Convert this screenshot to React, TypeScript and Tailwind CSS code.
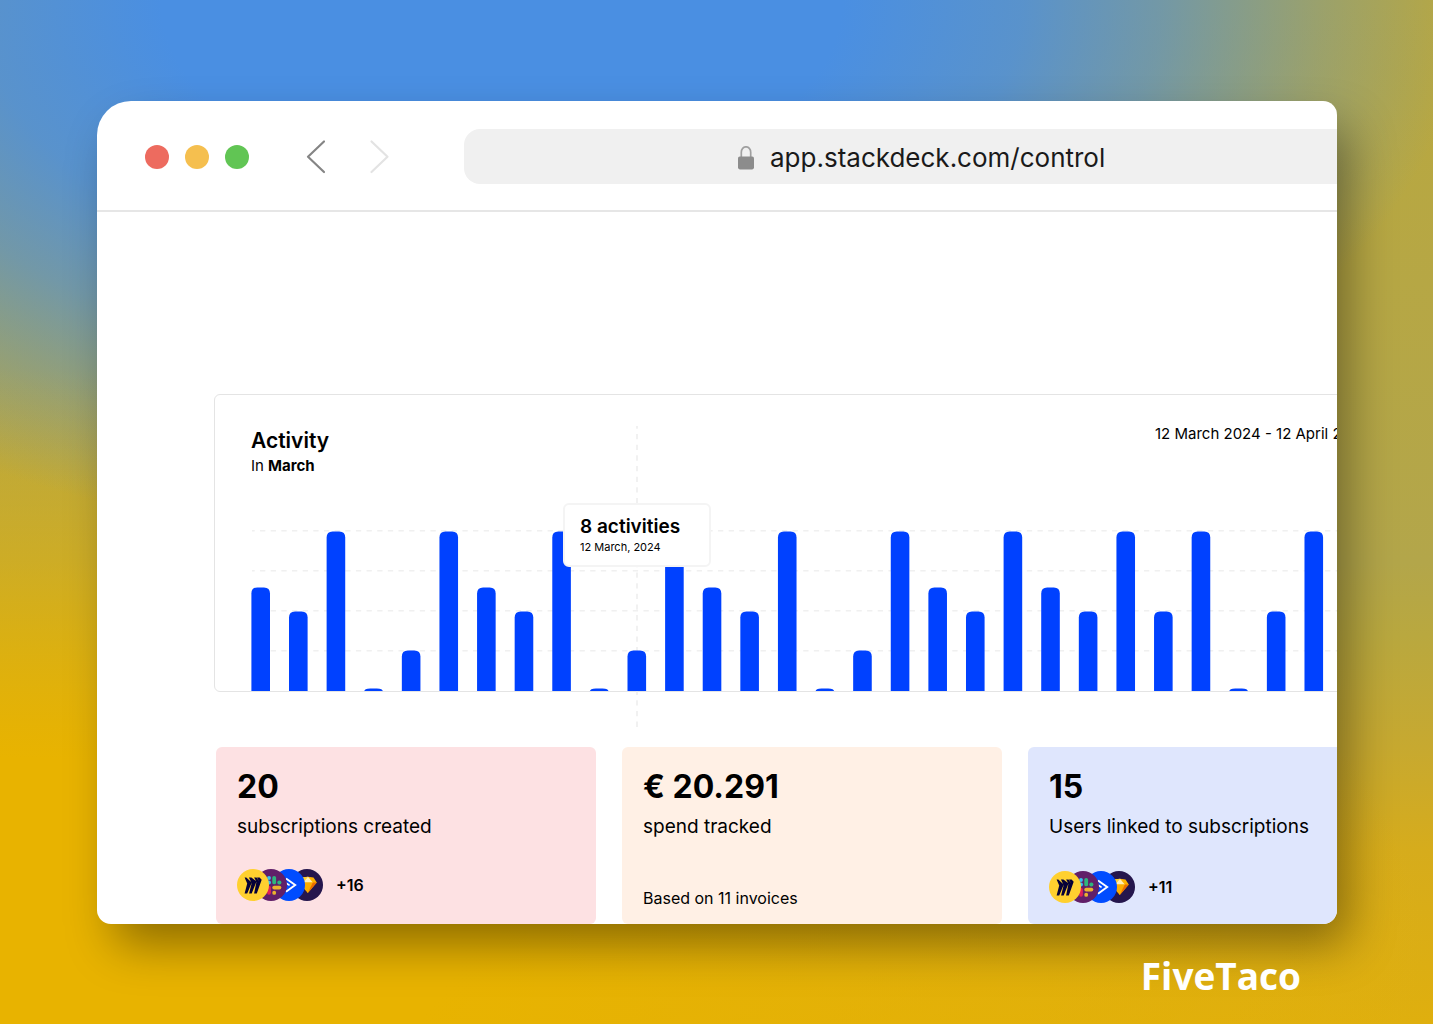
const FULL = 160;
const MID = 104;
const SMALL = 80;
const LOW = 41;
const NONE = 3;

const bars = [
    MID, SMALL, FULL, NONE, LOW, FULL, MID, SMALL, FULL, NONE,
    LOW, FULL, MID, SMALL, FULL, NONE, LOW, FULL, MID, SMALL,
    FULL, MID, SMALL, FULL, SMALL, FULL, NONE, SMALL, FULL,
];

const BAR_STEP = 37.61;
const BAR_WIDTH = 18.6;

function barPath(index: number, height: number) {
    const x = index * BAR_STEP + 0.4;
    const y = FULL - height + 0.4;
    const r = Math.min(6, height);
    return `M${x} ${FULL}V${y + r}Q${x} ${y} ${x + 6} ${y}H${x + BAR_WIDTH - 6}Q${x + BAR_WIDTH} ${y} ${x + BAR_WIDTH} ${y + r}V${FULL}Z`;
}

function MiroIcon() {
    return (
        <svg viewBox="0 0 32 32" className="relative z-40 size-8 shrink-0" aria-hidden="true">
            <circle cx="16" cy="16" r="16" fill="#ffd02f" />
            <path
                d="M19.6 8.5h-2.5l2 3.6-4.7-3.6h-2.5l2.2 4.4-4.8-4.4H7.6l2.6 5.9-2.6 10h2.6l4.7-11.2-2.8 11.2h2.6l4.8-12-2.4 12h2.7l4.9-13.6-2.1-2.3h-2.6l2.1 3.9z"
                fill="#050038"
            />
        </svg>
    );
}

function SlackIcon() {
    return (
        <svg viewBox="0 0 32 32" className="relative z-30 -ml-[14px] size-8 shrink-0" aria-hidden="true">
            <circle cx="16" cy="16" r="16" fill="#611f69" />
            <g strokeWidth="3.8" strokeLinecap="round">
                <path d="M19.2 8.8v4.6" stroke="#2eb67d" />
                <path d="M24.2 13.5h.3" stroke="#2eb67d" />
                <path d="M19.2 18.6h5.2" stroke="#ecb22e" />
                <path d="M19.2 23.7v.2" stroke="#ecb22e" />
                <path d="M14 18.6v5.2" stroke="#e01e5a" />
                <path d="M9 18.6h.2" stroke="#e01e5a" />
                <path d="M9 13.5h5" stroke="#36c5f0" />
                <path d="M14 8.8v.2" stroke="#36c5f0" />
            </g>
        </svg>
    );
}

function ActiveCampaignIcon() {
    return (
        <svg viewBox="0 0 32 32" className="relative z-20 -ml-[14px] size-8 shrink-0" aria-hidden="true">
            <circle cx="16" cy="16" r="16" fill="#004cff" />
            <path d="M13 9.5l9.2 6.6-9.2 6.7" fill="none" stroke="#fff" strokeWidth="1.9" />
            <path d="M13 14l3.6 2.4" fill="none" stroke="#fff" strokeWidth="1.6" />
        </svg>
    );
}

function SketchIcon() {
    return (
        <svg viewBox="0 0 32 32" className="relative z-10 -ml-[14px] size-8 shrink-0" aria-hidden="true">
            <circle cx="16" cy="16" r="16" fill="#25164d" />
            <path d="M11 8.6l6-.8 5.5.8 3.3 4.9-9 10.6-9.2-10.6z" fill="#fdb300" />
            <path d="M11 8.6l6-.8-4.8 5.7H7.6z" fill="#fdd231" />
            <path d="M17 7.8l4.8 5.7h-9.6z" fill="#feeeb7" />
            <path d="M12.2 13.5h9.6l-5 10.6z" fill="#fdad00" />
            <path d="M21.8 13.5h4l-9 10.6z" fill="#ea6c00" />
        </svg>
    );
}

function AppStack({ more }: { more: string }) {
    return (
        <div className="flex items-center">
            <MiroIcon />
            <SlackIcon />
            <ActiveCampaignIcon />
            <SketchIcon />
            <span className="ml-[13px] text-[16px] leading-6 font-semibold">{more}</span>
        </div>
    );
}

function ActivityChart() {
    return (
        <svg className="h-40 w-full overflow-visible" role="img" aria-label="Activities per day">
            {[0, 40, 80, 120].map((y) => (
                <line key={y} x1="1" x2="1157" y1={y - 0.2} y2={y - 0.2} stroke="#f0f0f0" strokeWidth="1.4" strokeDasharray="5.3 5.35" strokeDashoffset="2.6" />
            ))}
            <line x1="386" x2="386" y1="-105" y2="198" stroke="#ececec" strokeWidth="1.4" strokeDasharray="5.3 5.35" strokeDashoffset="2.6" />
            {bars.map((height, index) => (
                <path key={index} d={barPath(index, height)} fill="#0041ff" />
            ))}
        </svg>
    );
}

export default function App() {
    return (
        <div
            className="flex min-h-screen flex-col overflow-hidden bg-[#b9a83f] bg-[radial-gradient(ellipse_66%_53%_at_35%_0%,#4a8fe2_0%,#4a8fe2_36%,#4a8fe2dc_55%,#4a8fe2a0_70%,#4a8fe244_87%,#4a8fe200_102%),radial-gradient(ellipse_100%_56%_at_0%_92%,#e8b300_0%,#e8b300_32%,#e8b30000_100%),linear-gradient(to_bottom,#b9a83f_0%,#b3a64a_55%,#b9a83f_62%,#c7a930_73%,#d6ac1c_83%,#dfaf0e_100%)] pt-[101px] pr-24 pb-6 pl-[97px] font-['Inter',sans-serif] text-black"
        >
            <div className="overflow-hidden rounded-[14px] rounded-tl-[34px] bg-white shadow-[14px_24px_48px_-4px_rgba(0,0,0,0.4)]">
                {/* Browser bar */}
                <header className="flex h-[111px] items-center border-b-2 border-[#e6e6e6] pt-0.5 pl-12">
                    <div className="flex shrink-0 gap-4">
                        <span className="size-6 rounded-full bg-[#ed6b5f]" />
                        <span className="size-6 rounded-full bg-[#f5bf4f]" />
                        <span className="size-6 rounded-full bg-[#61c554]" />
                    </div>
                    <div className="ml-[54px] flex shrink-0 gap-10">
                        <button type="button" aria-label="Back">
                            <svg viewBox="0 0 24 36" className="h-9 w-6" fill="none" stroke="#858585" strokeWidth="2.2" strokeLinecap="round" strokeLinejoin="round">
                                <path d="M21 2.5L5 17.8l16 15.2" />
                            </svg>
                        </button>
                        <button type="button" aria-label="Forward">
                            <svg viewBox="0 0 24 36" className="h-9 w-6" fill="none" stroke="#e3e3e3" strokeWidth="2.2" strokeLinecap="round" strokeLinejoin="round">
                                <path d="M4.5 2.5l16 15.3L4.5 33" />
                            </svg>
                        </button>
                    </div>
                    <label className="ml-[73px] flex h-[55px] w-[914px] shrink-0 items-center justify-center gap-4 rounded-2xl bg-[#f0f0f0] pt-0.5">
                        <svg viewBox="0 0 16 24" className="h-6 w-4" aria-hidden="true">
                            <path d="M3.3 12V6.3a4.7 5.5 0 0 1 9.4 0V12" fill="none" stroke="#a0a0a0" strokeWidth="1.7" />
                            <rect y="10.4" width="16" height="13" rx="1.8" fill="#8c8c8c" />
                        </svg>
                        <input
                            type="text"
                            aria-label="Address"
                            defaultValue="app.stackdeck.com/control"
                            className="w-[334px] bg-transparent text-[26px] leading-8 text-[#1a1a1a] outline-none"
                        />
                    </label>
                </header>

                <main className="h-[712px] overflow-hidden pt-[182px] pl-[117px]">
                    <div className="w-[1196px]">
                        {/* Activity */}
                        <section className="relative rounded-md border border-[#e4e4e4] px-9 pt-[29px]">
                            <div className="flex justify-between">
                                <div className="pt-[3px]">
                                    <h2 className="text-[21px] leading-7 font-semibold">Activity</h2>
                                    <p className="text-[15px] leading-[22px]">
                                        In <strong className="font-bold">March</strong>
                                    </p>
                                </div>
                                <p className="w-[218px] text-[15px] leading-5 whitespace-nowrap">12 March 2024 - 12 April 2024</p>
                            </div>
                            <div className="pt-[54px]">
                                <ActivityChart />
                            </div>
                            <div className="absolute top-[108px] left-[348px] h-16 w-[148px] rounded-md border-2 border-[#f4f4f4] bg-white px-[15px] pt-2.5">
                                <p className="text-[19px] leading-6 font-semibold">8 activities</p>
                                <p className="text-[11px] leading-4">12 March, 2024</p>
                            </div>
                        </section>

                        {/* Totals */}
                        <div className="mt-[55px] grid grid-cols-3 gap-[26px] px-0.5">
                            <section className="h-[177px] rounded-md bg-[#fde1e3] px-[21px] pt-5">
                                <p className="text-[32px] leading-10 font-bold">20</p>
                                <p className="mt-1.5 text-[19px] leading-7">subscriptions created</p>
                                <div className="mt-7">
                                    <AppStack more="+16" />
                                </div>
                            </section>
                            <section className="h-[177px] rounded-md bg-[#fff0e5] px-[21px] pt-5">
                                <p className="text-[32px] leading-10 font-bold">€ 20.291</p>
                                <p className="mt-1.5 text-[19px] leading-7">spend tracked</p>
                                <p className="mt-[45px] text-[16px] leading-6">Based on 11 invoices</p>
                            </section>
                            <section className="h-[177px] rounded-md bg-[#dfe6fd] px-[21px] pt-5">
                                <p className="text-[32px] leading-10 font-bold">15</p>
                                <p className="mt-1.5 text-[19px] leading-7">Users linked to subscriptions</p>
                                <div className="mt-[30px]">
                                    <AppStack more="+11" />
                                </div>
                            </section>
                        </div>
                    </div>
                </main>
            </div>
            <p className="mt-7 mr-9 text-right font-['Open_Sans',sans-serif] text-[37px] leading-[48px] font-bold text-white">FiveTaco</p>
        </div>
    );
}
